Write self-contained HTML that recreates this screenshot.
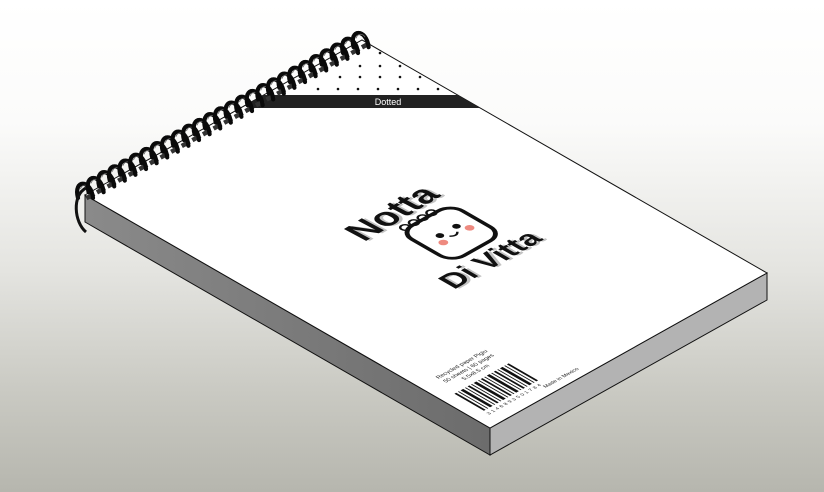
<!DOCTYPE html>
<html><head><meta charset="utf-8"><style>
html,body{margin:0;padding:0;width:824px;height:492px;overflow:hidden}
body{background:linear-gradient(180deg,#ffffff 0%,#fbfbfa 25%,#e4e4e0 55%,#c9c9c2 80%,#b6b6ae 100%)}
svg{display:block}
</style></head><body>
<svg width="824" height="492" viewBox="0 0 824 492" xmlns="http://www.w3.org/2000/svg" xmlns:xlink="http://www.w3.org/1999/xlink" font-family="Liberation Sans, sans-serif">
<defs>
<clipPath id="face"><polygon points="85,195 362,40 767,273 490,428"/></clipPath>
<linearGradient id="lg" x1="0" y1="0" x2="1" y2="0"><stop offset="0" stop-color="#8a8a8a"/><stop offset="1" stop-color="#6c6c6c"/></linearGradient>
<g id="coil">
  <rect x="-2" y="-2" width="9" height="4.5" fill="#333" transform="rotate(-29)"/>
  <path d="M5 1 C3 -18 -15 -18 -10 1" fill="none" stroke="#0a0a0a" stroke-width="4.2" stroke-linecap="round"/>
  <path d="M1.5 -9 C-1 -13 -6 -13 -7.5 -8" fill="none" stroke="#666" stroke-width="0.8"/>
</g>
</defs>
<polygon points="85,195 490,428 490,455 85,222" fill="url(#lg)" stroke="#111" stroke-width="1"/>
<polygon points="490,428 767,273 767,300 490,455" fill="#b3b3b3" stroke="#111" stroke-width="1"/>
<polygon points="85,195 362,40 767,273 490,428" fill="#fff" stroke="#111" stroke-width="1"/>
<g clip-path="url(#face)">
  <g fill="#111">
    <circle cx="380" cy="53" r="1.3"/>
    <circle cx="360" cy="66" r="1.3"/><circle cx="380" cy="66" r="1.3"/><circle cx="400" cy="66" r="1.3"/>
    <circle cx="340" cy="77" r="1.3"/><circle cx="360" cy="77" r="1.3"/><circle cx="380" cy="77" r="1.3"/><circle cx="400" cy="77" r="1.3"/><circle cx="420" cy="77" r="1.3"/>
    <circle cx="318" cy="89" r="1.3"/><circle cx="338" cy="89" r="1.3"/><circle cx="358" cy="89" r="1.3"/><circle cx="378" cy="89" r="1.3"/><circle cx="398" cy="89" r="1.3"/><circle cx="418" cy="89" r="1.3"/><circle cx="438" cy="89" r="1.3"/>
  </g>
  <rect x="250" y="95" width="260" height="13" fill="#222"/>
</g>
<text x="388" y="105" font-size="9" fill="#fff" text-anchor="middle">Dotted</text>
<g transform="matrix(0.874,-0.489,0.867,0.499,85,195)">
  <g transform="rotate(-2 160 195)">
    <text x="160" y="205" font-size="36" font-weight="bold" text-anchor="middle" fill="#888" opacity="0.5" transform="translate(2,2)">Notta</text>
    <text x="160" y="205" font-size="36" font-weight="bold" text-anchor="middle" fill="#111">Notta</text>
  </g>
  <text x="170" y="306" font-size="30" font-weight="bold" text-anchor="middle" fill="#888" opacity="0.5" transform="translate(2,2)">Di Vitta</text>
  <text x="170" y="306" font-size="30" font-weight="bold" text-anchor="middle" fill="#111">Di Vitta</text>
  <g transform="translate(0,5)">
  <rect x="145" y="212" width="58" height="60" rx="14" fill="#fff" stroke="#111" stroke-width="4"/>
  <g fill="none" stroke="#111" stroke-width="2">
    <circle cx="153" cy="210" r="4"/><circle cx="163" cy="210" r="4"/><circle cx="173" cy="210" r="4"/><circle cx="183" cy="210" r="4"/>
  </g>
  <circle cx="165" cy="238" r="3.5" fill="#111"/><circle cx="184" cy="238" r="3.5" fill="#111"/>
  <circle cx="160" cy="247" r="4" fill="#ee8a80"/><circle cx="190" cy="247" r="4" fill="#ee8a80"/>
  <path d="M170 244 q4.5 5 9 0" fill="none" stroke="#111" stroke-width="2"/>
  </g>
  <g font-size="6" fill="#222" text-anchor="middle">
    <text x="48" y="388">Recycled paper Pigiu</text>
    <text x="48" y="396">50 sheets | 60 pages</text>
    <text x="48" y="404">5.5x8.5 cm</text>
  </g>
  <g fill="#111">
    <rect x="14" y="412" width="2" height="34"/><rect x="18" y="412" width="1" height="34"/><rect x="21" y="412" width="3" height="34"/><rect x="26" y="412" width="1" height="34"/><rect x="29" y="412" width="2" height="34"/><rect x="33" y="412" width="1" height="34"/><rect x="36" y="412" width="3" height="34"/><rect x="41" y="412" width="1" height="34"/><rect x="44" y="412" width="2" height="34"/><rect x="48" y="412" width="1" height="34"/><rect x="51" y="412" width="3" height="34"/><rect x="56" y="412" width="1" height="34"/><rect x="59" y="412" width="2" height="34"/><rect x="63" y="412" width="1" height="34"/><rect x="66" y="412" width="3" height="34"/><rect x="71" y="412" width="1" height="34"/><rect x="74" y="412" width="2" height="34"/>
  </g>
  <text x="44" y="453" font-size="5" fill="#222" text-anchor="middle" letter-spacing="2">3146893501784</text>
  <text x="92" y="458" font-size="5.5" fill="#222" text-anchor="middle">Made in Mexico</text>
</g>
<use xlink:href="#coil" href="#coil" x="88" y="197"/>
<use xlink:href="#coil" href="#coil" x="98.6" y="191.2"/>
<use xlink:href="#coil" href="#coil" x="109.2" y="185.4"/>
<use xlink:href="#coil" href="#coil" x="119.8" y="179.6"/>
<use xlink:href="#coil" href="#coil" x="130.4" y="173.8"/>
<use xlink:href="#coil" href="#coil" x="141" y="168"/>
<use xlink:href="#coil" href="#coil" x="151.6" y="162.2"/>
<use xlink:href="#coil" href="#coil" x="162.2" y="156.4"/>
<use xlink:href="#coil" href="#coil" x="172.8" y="150.6"/>
<use xlink:href="#coil" href="#coil" x="183.4" y="144.8"/>
<use xlink:href="#coil" href="#coil" x="194" y="139"/>
<use xlink:href="#coil" href="#coil" x="204.6" y="133.2"/>
<use xlink:href="#coil" href="#coil" x="215.2" y="127.4"/>
<use xlink:href="#coil" href="#coil" x="225.8" y="121.6"/>
<use xlink:href="#coil" href="#coil" x="236.4" y="115.8"/>
<use xlink:href="#coil" href="#coil" x="247" y="110"/>
<use xlink:href="#coil" href="#coil" x="257.6" y="104.2"/>
<use xlink:href="#coil" href="#coil" x="268.2" y="98.4"/>
<use xlink:href="#coil" href="#coil" x="278.8" y="92.6"/>
<use xlink:href="#coil" href="#coil" x="289.4" y="86.8"/>
<use xlink:href="#coil" href="#coil" x="300" y="81"/>
<use xlink:href="#coil" href="#coil" x="310.6" y="75.2"/>
<use xlink:href="#coil" href="#coil" x="321.2" y="69.4"/>
<use xlink:href="#coil" href="#coil" x="331.8" y="63.6"/>
<use xlink:href="#coil" href="#coil" x="342.4" y="57.8"/>
<use xlink:href="#coil" href="#coil" x="353" y="52"/>
<use xlink:href="#coil" href="#coil" x="363.6" y="46.2"/>
<path d="M86 188 C72 195 74 222 86 232" fill="none" stroke="#111" stroke-width="3"/>
</svg>
</body></html>
